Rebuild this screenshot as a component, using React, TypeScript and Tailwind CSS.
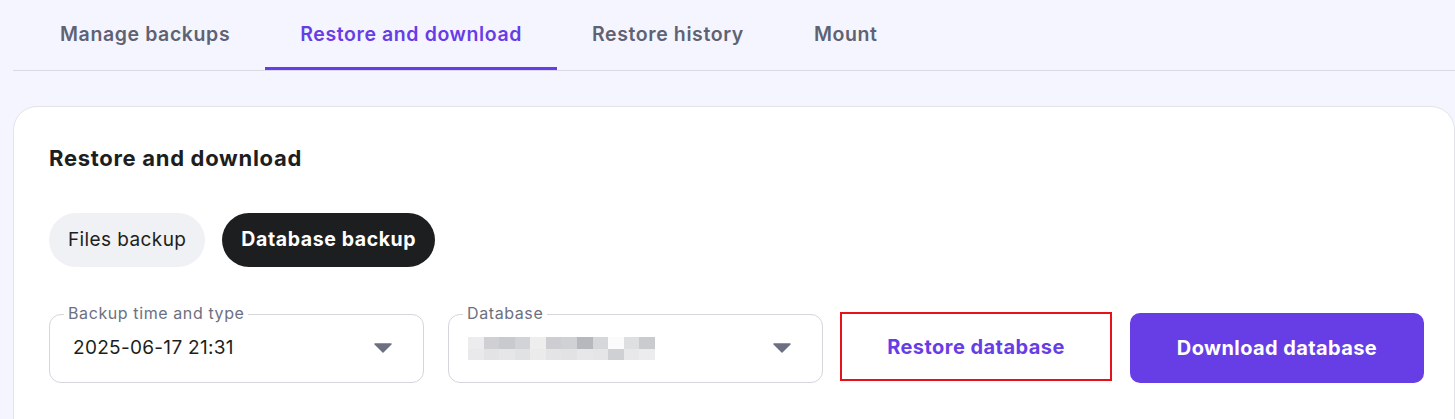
import React from 'react';

const tabs = [
  { label: 'Manage backups', active: false },
  { label: 'Restore and download', active: true },
  { label: 'Restore history', active: false },
  { label: 'Mount', active: false },
];

// pixelated (blurred) database name
const blurTop = [
  'bg-[#ececee]', 'bg-[#cfd0d4]', 'bg-[#c8cacf]', 'bg-[#d2d3d7]', 'bg-[#eeeeef]', 'bg-[#cdced2]',
  'bg-[#d0d1d5]', 'bg-[#b7b8bd]', 'bg-[#d6d7db]', 'bg-[#fbfbfb]', 'bg-[#dedfe1]', 'bg-[#c9cbcf]',
];
const blurBottom = [
  'bg-[#e9e9eb]', 'bg-[#e3e3e5]', 'bg-[#e6e6e8]', 'bg-[#e1e2e4]', 'bg-[#ebebec]', 'bg-[#e4e4e6]',
  'bg-[#e2e2e4]', 'bg-[#e7e7e9]', 'bg-[#e5e5e7]', 'bg-[#cfd0d3]', 'bg-[#e8e8ea]', 'bg-[#ececee]',
];

function Caret() {
  return (
    <svg width="18" height="10" viewBox="0 0 18 10" className="shrink-0">
      <path d="M1 1h16l-8 8z" fill="#6d7081" stroke="#6d7081" strokeWidth="1.5" strokeLinejoin="round" />
    </svg>
  );
}

function Select({ label, children }: { label: string; children: React.ReactNode }) {
  return (
    <div className="relative w-[375px] h-[69px] rounded-xl border border-[#d5d5dc] flex items-center pl-[23px] pr-[31px]">
      <span className="absolute -top-[12px] left-[14px] bg-white px-[4px] text-[16px] leading-[20px] tracking-[0.6px] text-[#6d7081]">
        {label}
      </span>
      <div className="flex-1">{children}</div>
      <Caret />
    </div>
  );
}

export default function App() {
  return (
    <div
      className="w-full h-[419px] overflow-hidden bg-[#f4f5ff] pl-[13px]"
      style={{ fontFamily: 'Inter, "Noto Sans", "Liberation Sans", sans-serif' }}
    >
      <div className="flex border-b border-[#d8d9e2] pl-3">
        {tabs.map((t) => (
          <div
            key={t.label}
            className={`h-[70px] px-[35px] flex items-center text-[19.5px] tracking-[0.6px] font-semibold border-b-[3px] ${
              t.active ? 'text-[#673de6] border-[#673de6]' : 'text-[#5f6273] border-transparent'
            }`}
          >
            <span className="pt-[3px]">{t.label}</span>
          </div>
        ))}
      </div>

      <div className="mt-[35px] h-[340px] bg-white border border-[#e3e3ea] rounded-3xl pl-[35px] pt-[36px]">
        <h2 className="text-[22px] leading-[30px] tracking-[0.7px] font-bold text-[#1d1e20]">Restore and download</h2>

        <div className="flex gap-[17px] mt-[40px]">
          <button className="h-[54px] px-[19px] rounded-full bg-[#f0f1f5] text-[19px] tracking-[0.4px] text-[#1d1e20]">
            Files backup
          </button>
          <button className="h-[54px] px-[19px] rounded-full bg-[#1d1e20] text-[19.5px] tracking-[0.6px] font-bold text-white">
            Database backup
          </button>
        </div>

        <div className="flex items-center mt-[45px]">
          <Select label="Backup time and type">
            <span className="text-[19px] tracking-[0.3px] text-[#1d1e20]">2025-06-17 21:31</span>
          </Select>
          <div className="ml-[24px]">
            <Select label="Database">
              <div className="flex flex-col w-[187px] -ml-[4px]">
                <div className="flex h-[12px]">
                  {blurTop.map((c, i) => (
                    <div key={i} className={`flex-1 ${c}`} />
                  ))}
                </div>
                <div className="flex h-[11px]">
                  {blurBottom.map((c, i) => (
                    <div key={i} className={`flex-1 ${c}`} />
                  ))}
                </div>
              </div>
            </Select>
          </div>
          <button className="ml-[17px] mb-[3px] w-[272px] h-[69px] border-2 border-[#e8101a] text-[20px] tracking-[0.45px] font-bold text-[#673de6]">
            Restore database
          </button>
          <button className="ml-[18px] w-[294px] h-[70px] rounded-[10px] bg-[#673de6] text-[20px] tracking-[0.4px] font-bold text-white">
            Download database
          </button>
        </div>
      </div>
    </div>
  );
}
